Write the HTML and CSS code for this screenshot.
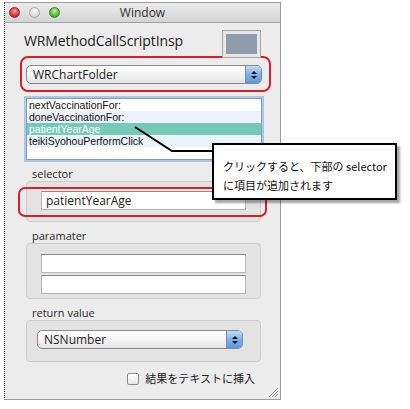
FILE: index.html
```html
<!DOCTYPE html>
<html lang="ja">
<head>
  <meta charset="UTF-8" />
  <meta name="viewport" content="width=device-width, initial-scale=1.0" />
  <title>Window</title>
  <link rel="stylesheet" href="styles.css">
</head>
<body>
  <div class="window">
    <div class="titlebar">
      <div class="lights">
        <span class="light close"></span>
        <span class="light mini"></span>
        <span class="light zoom"></span>
      </div>
      <div class="title">Window</div>
    </div>

    <div class="content">
      <div class="head">
        <h1 class="name">WRMethodCallScriptInspector</h1>
        <div class="well"><div class="swatch"></div></div>
      </div>

      <div class="mark">
        <div class="popup">
          <span class="popup-text">WRChartFolder</span>
          <span class="stepper"><i class="up"></i><i class="down"></i></span>
        </div>
      </div>

      <ul class="methods">
        <li>nextVaccinationFor:</li>
        <li class="alt">doneVaccinationFor:</li>
        <li class="selected">patientYearAge</li>
        <li class="alt">teikiSyohouPerformClick</li>
        <li></li>
      </ul>

      <div class="label">selector</div>
      <div class="group selector-group">
        <div class="field">patientYearAge</div>
        <div class="mark-field"></div>
      </div>

      <div class="label">paramater</div>
      <div class="group param-group">
        <div class="field"></div>
        <div class="field"></div>
      </div>

      <div class="label">return value</div>
      <div class="group return-group">
        <div class="popup">
          <span class="popup-text">NSNumber</span>
          <span class="stepper"><i class="up"></i><i class="down"></i></span>
        </div>
      </div>

      <label class="check">
        <span class="box"></span>
        <span>結果をテキストに挿入</span>
      </label>
    </div>

    <svg class="grip" width="11" height="11" viewBox="0 0 11 11">
      <path d="M1 10 L10 1 M4 10 L10 4 M7 10 L10 7" stroke="#9a9a9a" stroke-width="1" />
    </svg>
  </div>

  <!-- annotation: pointer line + note box -->
  <svg class="pointer" width="410" height="409" viewBox="0 0 410 409">
    <path d="M135 127 L172 151 L213 151" fill="none" stroke="#000" stroke-width="2" />
  </svg>
  <div class="note">
    <p>クリックすると、下部の selector</p>
    <p>に項目が追加されます</p>
  </div>
</body>
</html>
```

FILE: styles.css
```css
body {
  margin: 0;
  background: #fff;
  font-family: "Open Sans", "Liberation Sans", "Noto Sans CJK JP", sans-serif;
  color: #222;
  width: 410px;
  height: 409px;
  position: relative;
  overflow: hidden;
}

.window {
  position: relative;
  margin: 2px 0 0 4px;
  width: 275px;
  height: 396px;
  background: #ececec;
  border: 1px solid #9c9c9c;
  border-left: 1px dotted #444;
}

.titlebar {
  height: 19px;
  background: linear-gradient(#ebebeb, #d4d4d4);
  border-bottom: 1px solid #a3a3a3;
  display: flex;
  align-items: center;
  position: relative;
}
.lights {
  display: flex;
  gap: 9px;
  padding-left: 4px;
}
.light {
  width: 11px;
  height: 11px;
  border-radius: 50%;
  box-sizing: border-box;
}
.light.close {
  background: radial-gradient(circle at 50% 35%, #f6a0a0, #d8343a 60%, #a81c22);
  border: 1px solid #9a2a2a;
}
.light.mini {
  background: radial-gradient(circle at 50% 35%, #fafafa, #d6d6d6 70%);
  border: 1px solid #a8a8a8;
}
.light.zoom {
  background: radial-gradient(circle at 50% 35%, #c8f0a8, #58b838 60%, #3a8a22);
  border: 1px solid #3e8a2a;
}
.title {
  position: absolute;
  left: 0;
  right: 0;
  text-align: center;
  font-size: 12px;
  color: #333;
}

.content {
  padding: 0 19px 0 21px;
}

.head {
  height: 33px;
  display: flex;
  justify-content: space-between;
  align-items: flex-start;
}
.name {
  margin: 9px 0 0 -2px;
  width: 159px;
  overflow: hidden;
  white-space: nowrap;
  font-size: 14px;
  letter-spacing: -0.1px;
  font-weight: normal;
  line-height: 18px;
  color: #1a1a1a;
}
.well {
  margin-top: 7px;
  width: 39px;
  height: 28px;
  box-sizing: border-box;
  padding: 3px;
  border: 1px solid #a6a6a6;
  background: #e6e6e6;
  position: relative;
  z-index: 1;
}
.swatch {
  height: 100%;
  background: #8f9cab;
}

/* red annotation frames */
.mark {
  margin: 0 -10px 0 -6px;
  padding: 7px 7px 6px 4px;
  border: 2px solid #d61f26;
  border-radius: 8px;
}
.mark-field {
  position: absolute;
  left: -9px;
  top: 5px;
  width: 249px;
  height: 30px;
  box-sizing: border-box;
  border: 2px solid #d61f26;
  border-radius: 7px;
}

.popup {
  height: 19px;
  box-sizing: border-box;
  border: 1px solid #8a8a8a;
  border-radius: 5px;
  background: linear-gradient(#ffffff, #f4f4f4 50%, #e4e4e4);
  display: flex;
  align-items: center;
  overflow: hidden;
  font-size: 12px;
}
.popup-text {
  flex: 1;
  padding-left: 6px;
  line-height: 17px;
}
.stepper {
  width: 15px;
  align-self: stretch;
  background: linear-gradient(#c4dcf6, #7fb1ea 50%, #5b98e0);
  border-left: 1px solid #7b8ea6;
  display: flex;
  flex-direction: column;
  align-items: center;
  justify-content: center;
  gap: 2px;
}
.stepper i {
  width: 0;
  height: 0;
  border-left: 3px solid transparent;
  border-right: 3px solid transparent;
}
.stepper .up {
  border-bottom: 3px solid #111;
}
.stepper .down {
  border-top: 3px solid #111;
}

.methods {
  list-style: none;
  margin: 6px -1px 0 0;
  padding: 0;
  border: 1px solid #7f9cc4;
  box-shadow: 0 0 0 2px #aec6e4;
  background: #fff;
  font-family: "Liberation Sans", sans-serif;
  font-size: 10.5px;
}
.methods li {
  height: 12px;
  line-height: 12px;
  padding-left: 2px;
  color: #111;
}
.methods li.alt {
  background: #edf3fd;
}
.methods li.selected {
  background: #74c9b7;
  color: #fff;
}

.label {
  margin-top: 7px;
  padding-left: 6px;
  font-size: 11px;
  line-height: 13px;
  color: #2a2a2a;
}

.group {
  margin-top: 1px;
  border: 1px solid #cdcdcd;
  border-radius: 4px;
  background: #e3e3e3;
  position: relative;
}
.selector-group {
  padding: 9px 14px 11px 14px;
}
.param-group {
  padding: 10px 14px 4px 14px;
  display: flex;
  flex-direction: column;
  gap: 2px;
}
.return-group {
  padding: 9px 17px 12px 10px;
}

.field {
  height: 19px;
  box-sizing: border-box;
  background: #fff;
  border: 1px solid #b4b4b4;
  border-top-color: #8c8c8c;
  font-size: 12px;
  line-height: 17px;
  padding-left: 4px;
}

.check {
  margin: 9px 6px 0 0;
  display: flex;
  justify-content: flex-end;
  align-items: center;
  gap: 6px;
  font-size: 11px;
  line-height: 16px;
  color: #222;
}
.box {
  width: 10px;
  height: 10px;
  border: 1px solid #8a8a8a;
  border-radius: 2px;
  background: linear-gradient(#fff, #e6e6e6);
}

.grip {
  position: absolute;
  right: 1px;
  bottom: 1px;
}

.pointer {
  position: absolute;
  left: 0;
  top: 0;
}

.note {
  position: absolute;
  left: 212px;
  top: 143px;
  width: 185px;
  height: 57px;
  box-sizing: border-box;
  border: 2px solid #000;
  background: #fff;
  box-shadow: 3px 3px 2px rgba(0, 0, 0, 0.35);
  padding: 12px 0 0 9px;
  font-family: "Noto Sans CJK JP", sans-serif;
  font-size: 11px;
  color: #111;
}
.note p {
  margin: 0;
  line-height: 19px;
  white-space: nowrap;
}
```
